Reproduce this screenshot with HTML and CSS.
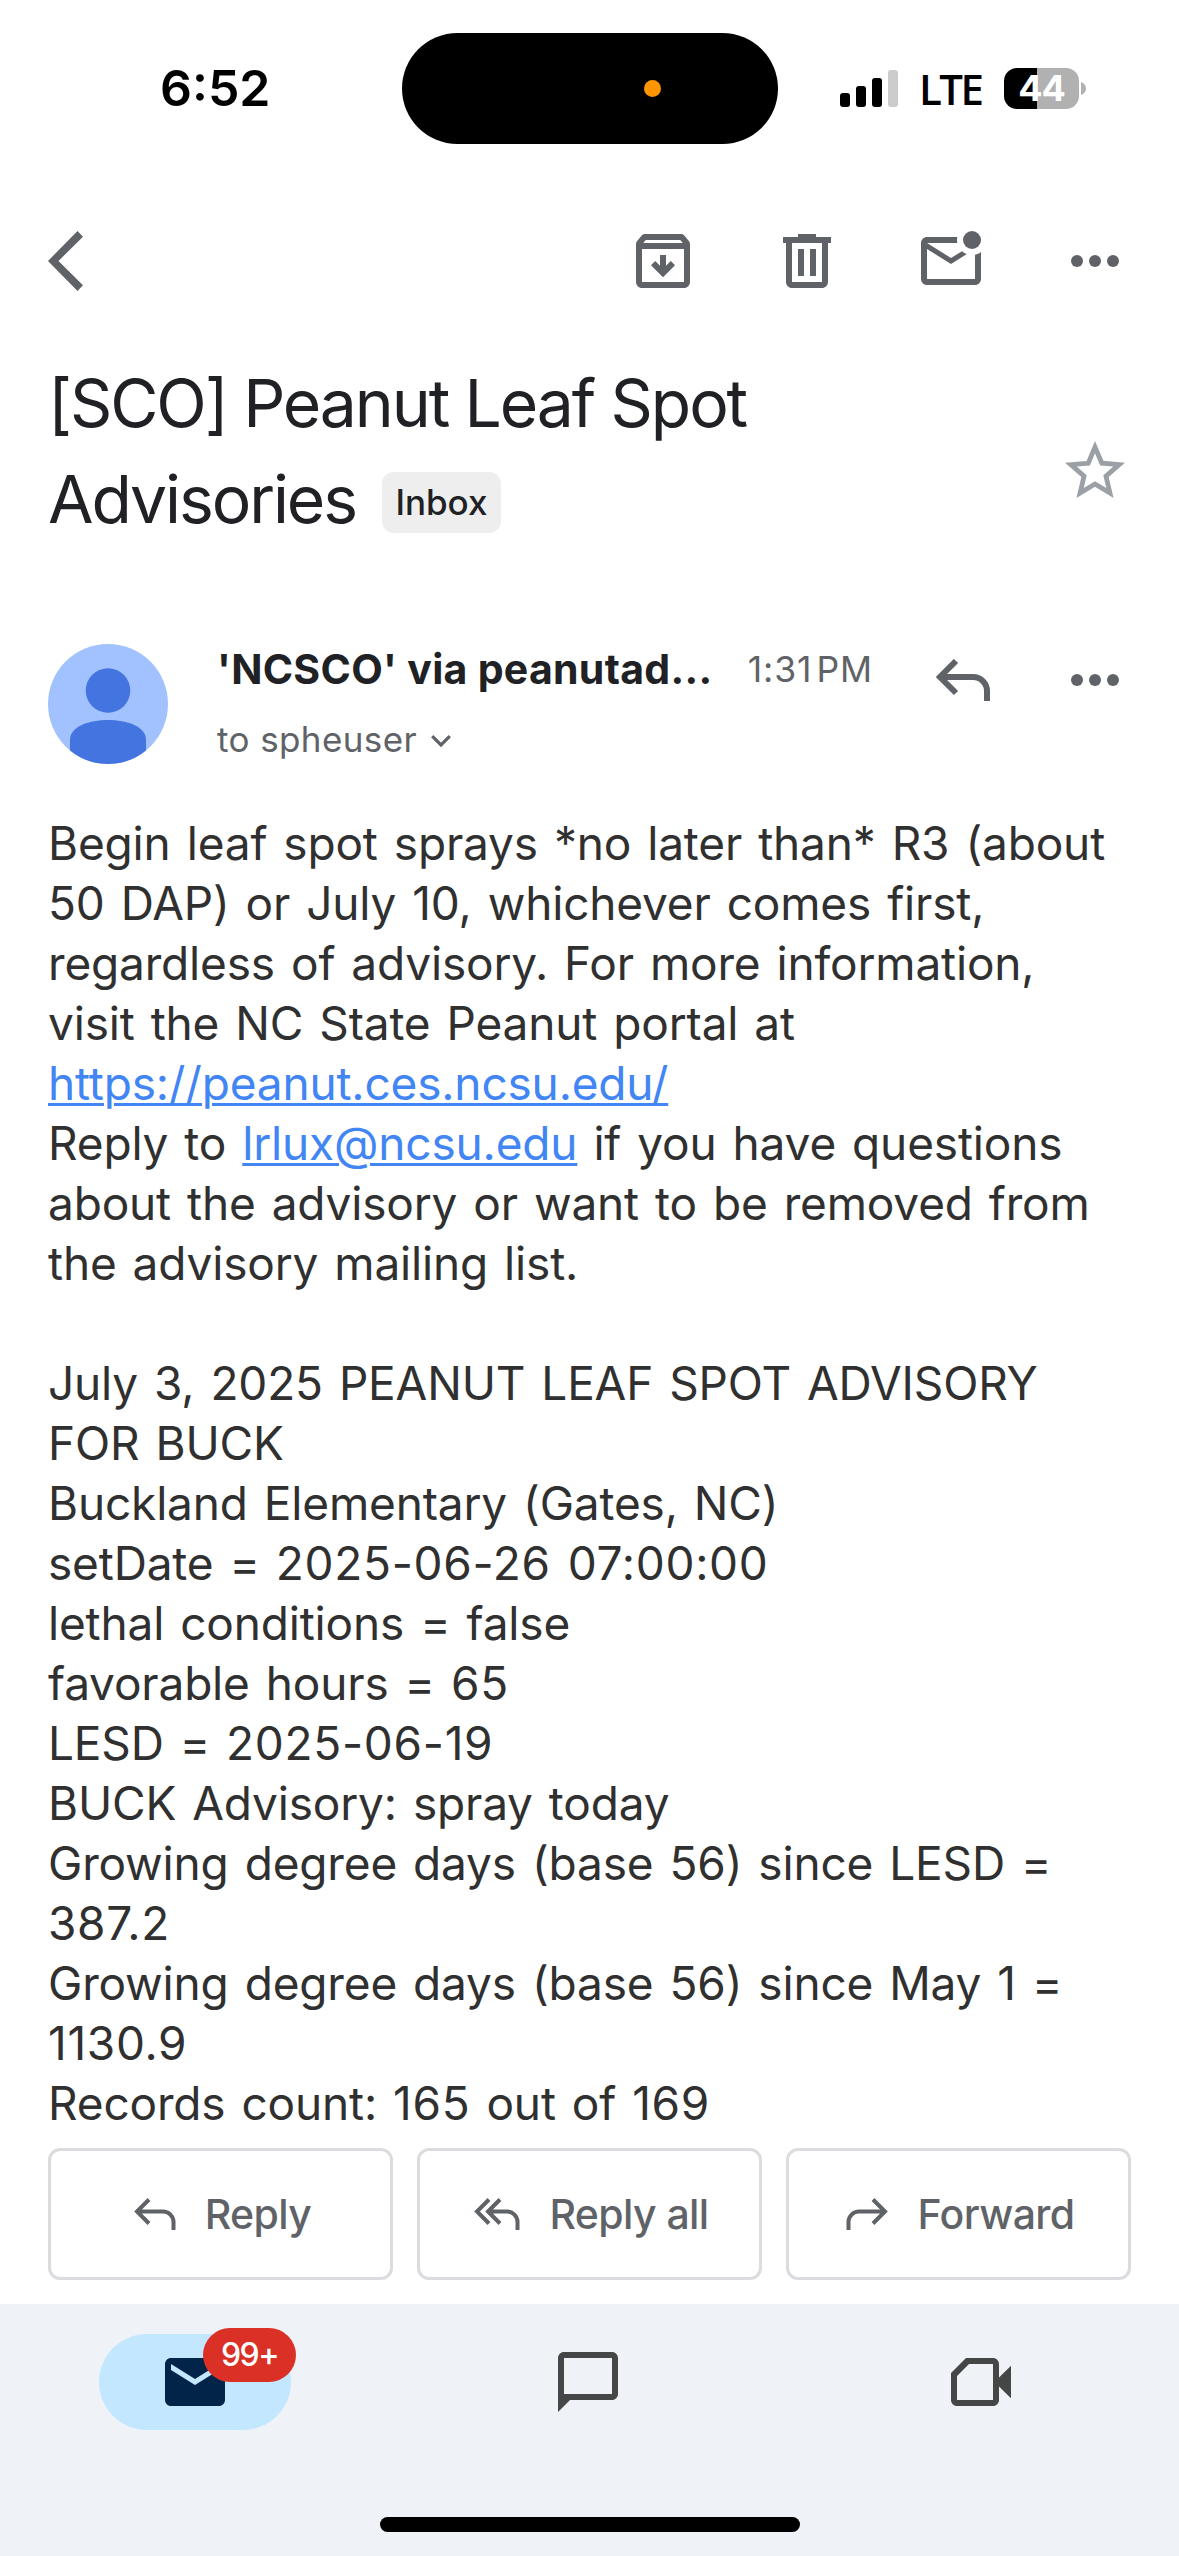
FILE: index.html
```html
<!DOCTYPE html>
<html lang="en">

<head>
	<meta charset="UTF-8">
	<meta name="viewport" content="width=device-width, initial-scale=1.0">
	<title>[SCO] Peanut Leaf Spot Advisories</title>
	<link rel="stylesheet" href="styles.css">
</head>

<body>
	<div id="status">
		<div class="clock">6:52</div>
		<div class="island"><span class="mic"></span></div>
		<div class="signals">
			<svg class="bars" width="58" height="37" viewBox="0 0 58 37">
				<rect x="0" y="23" width="10" height="14" rx="3" />
				<rect x="16" y="16" width="10" height="21" rx="3" />
				<rect x="32" y="8" width="10" height="29" rx="3" />
				<rect x="48" y="0" width="10" height="37" rx="3" fill="#ccc" />
			</svg>
			<span class="network">LTE</span>
			<div class="battery"><span>44</span></div>
			<svg class="nub" width="5" height="13" viewBox="0 0 5 13">
				<path d="M0 0c3 1 5 3.500 5 6.500S3 12 0 13z" fill="#b1b1b1" />
			</svg>
		</div>
	</div>

	<header>
		<svg class="back" width="72" height="72" viewBox="0 0 72 72">
			<path d="M38.500 6l5.500 5.700L19.500 36 44 60.300 38.500 66 9 36z" />
		</svg>
		<nav>
			<!-- archive -->
			<svg width="72" height="72" viewBox="0 0 24 24">
				<path d="M20.540 5.230l-1.390-1.680C18.880 3.210 18.470 3 18 3H6c-.47 0-.88.21-1.160.55L3.460 5.230C3.170 5.570 3 6.020 3 6.500V19c0 1.100.9 2 2 2h14c1.100 0 2-.9 2-2V6.500c0-.48-.17-.93-.46-1.270zM6.240 5h11.520l.83 1H5.420l.82-1zM5 19V8h14v11H5z" />
				<path d="M11 10h2v3.570L14.600 12l1.400 1.400-4 4-4-4L9.400 12l1.600 1.570z" />
			</svg>
			<!-- delete -->
			<svg width="72" height="72" viewBox="0 0 24 24">
				<path d="M15 4V3H9v1H4v2h1v13c0 1.100.9 2 2 2h10c1.100 0 2-.9 2-2V6h1V4h-5zm2 15H7V6h10v13zM9 8h2v9H9zm4 0h2v9h-2z" />
			</svg>
			<!-- mark unread -->
			<svg width="72" height="72" viewBox="0 0 24 24">
				<path d="M22 8.980V18c0 1.100-.9 2-2 2H4c-1.100 0-2-.9-2-2V6c0-1.100.9-2 2-2h10.100c-.06.32-.1.66-.1 1 0 .34.04.68.1 1H4l8 5 3.670-2.290c.47.43 1.020.76 1.630.98L12 13 4 8v10h16V9.900c.74-.15 1.420-.48 2-.92z" />
				<circle cx="19" cy="5" r="3" />
			</svg>
			<svg width="72" height="72" viewBox="0 0 24 24">
				<circle cx="6" cy="12" r="2" />
				<circle cx="12" cy="12" r="2" />
				<circle cx="18" cy="12" r="2" />
			</svg>
		</nav>
	</header>

	<main>
		<div id="subject">
			<h1>[SCO] Peanut Leaf Spot<br>Advisories<span class="chip">Inbox</span></h1>
			<svg class="star" width="72" height="72" viewBox="0 0 24 24">
				<path d="M22 9.240l-7.190-.62L12 2 9.190 8.630 2 9.240l5.460 4.730L5.820 21 12 17.270 18.180 21l-1.630-7.030L22 9.240zM12 15.400l-3.760 2.270 1-4.280-3.320-2.880 4.380-.38L12 6.100l1.710 4.040 4.380.38-3.320 2.880 1 4.280L12 15.400z" />
			</svg>
		</div>

		<div id="sender">
			<svg class="avatar" width="120" height="120" viewBox="0 0 120 120">
				<clipPath id="round"><circle cx="60" cy="60" r="60" /></clipPath>
				<g clip-path="url(#round)">
					<rect width="120" height="120" fill="#a1c2ff" />
					<circle cx="60" cy="46.500" r="22.300" fill="#4374e0" />
					<path d="M22 120V96C22 82 42 76 60 76s38 6 38 20v24z" fill="#4374e0" />
				</g>
			</svg>
			<div class="who">
				<div class="top">
					<span class="name">'NCSCO' via peanutad...</span>
					<span class="time">1:31&#8202;PM</span>
				</div>
				<div class="to">
					<span>to spheuser</span>
					<svg width="20" height="13" viewBox="0 0 20 13">
						<path d="M1.200 1.200L10 10l8.800-8.800" fill="none" stroke="#5f6368" stroke-width="3.200" />
					</svg>
				</div>
			</div>
			<svg class="reply" width="54" height="42" viewBox="0 0 54 42">
				<path d="M4 18h33a14 14 0 0 1 14 14v10M20 2L4 18l16 16" fill="none" stroke="#5f6368" stroke-width="6" />
			</svg>
			<svg class="more" width="72" height="72" viewBox="0 0 24 24">
				<circle cx="6" cy="12" r="2" />
				<circle cx="12" cy="12" r="2" />
				<circle cx="18" cy="12" r="2" />
			</svg>
		</div>

		<div id="message">
			Begin leaf spot sprays *no later than* R3 (about<br>
			50 DAP) or July 10, whichever comes first,<br>
			regardless of advisory. For more information,<br>
			visit the NC State Peanut portal at<br>
			<a href="#">https://peanut.ces.ncsu.edu/</a><br>
			Reply to <a href="#">lrlux@ncsu.edu</a> if you have questions<br>
			about the advisory or want to be removed from<br>
			the advisory mailing list.<br>
			<br>
			July 3, 2025 PEANUT LEAF SPOT ADVISORY<br>
			FOR BUCK<br>
			Buckland Elementary (Gates, NC)<br>
			setDate = <span class="num">2025-06-26 07:00:00</span><br>
			lethal conditions = false<br>
			favorable hours = <span class="num">65</span><br>
			LESD = <span class="num">2025-06-19</span><br>
			BUCK Advisory: spray today<br>
			Growing degree days (base 56) since LESD =<br>
			<span class="num">387.2</span><br>
			Growing degree days (base 56) since May 1 =<br>
			<span class="num">1130.9</span><br>
			Records count: <span class="num">165</span> out of <span class="num">169</span>
		</div>

		<div id="actions">
			<button>
				<svg width="42" height="32" viewBox="0 0 42 32">
					<path d="M3 13.500h26a10.500 10.500 0 0 1 10.500 10.500v8M15 1.500l-12 12 12 12" />
				</svg>
				<span>Reply</span>
			</button>
			<button>
				<svg width="46" height="32" viewBox="0 0 46 32">
					<path d="M14 13.500h19a10.500 10.500 0 0 1 10.500 10.500v8M26 1.500l-12 12 12 12M15 1.500l-12 12 12 12" />
				</svg>
				<span>Reply all</span>
			</button>
			<button>
				<svg width="42" height="32" viewBox="0 0 42 32">
					<path d="M39 13.500H13A10.500 10.500 0 0 0 2.500 24v8M27 1.500l12 12-12 12" />
				</svg>
				<span>Forward</span>
			</button>
		</div>
	</main>

	<footer>
		<div class="tabs">
			<div class="tab active">
				<svg width="72" height="72" viewBox="0 0 24 24">
					<path d="M20 4H4c-1.100 0-2 .9-2 2v12c0 1.100.9 2 2 2h16c1.100 0 2-.9 2-2V6c0-1.100-.9-2-2-2zm0 4l-8 5-8-5V6l8 5 8-5v2z" />
				</svg>
				<span class="badge">99+</span>
			</div>
			<div class="tab">
				<svg width="72" height="72" viewBox="0 0 24 24">
					<path d="M20 2H4c-1.100 0-2 .9-2 2v18l4-4h14c1.100 0 2-.9 2-2V4c0-1.100-.9-2-2-2zm0 14H4V4h16v12z" />
				</svg>
			</div>
			<div class="tab">
				<svg width="72" height="72" viewBox="0 0 24 24">
					<path d="M7 4h9c1.100 0 2 .9 2 2v4.500l4-3.900v10.800l-4-3.900V18c0 1.100-.9 2-2 2H4c-1.100 0-2-.9-2-2V9zm1 2l-4 4v8h12V6z" fill-rule="evenodd" />
				</svg>
			</div>
		</div>
		<div class="home"></div>
	</footer>
</body>

</html>
```

FILE: styles.css
```css
html,
body {
	margin: 0;
	width: 1179px;
	height: 2556px;
	background: #fff;
	font-family: Inter, 'Liberation Sans', sans-serif;
	color: #202124;
}

body {
	display: flex;
	flex-direction: column;
	overflow: hidden;
}

svg {
	display: block;
	flex: none;
	fill: #5f6368;
}

#status {
	display: grid;
	grid-template-columns: 402px 376px 1fr;
	height: 111px;
	padding-top: 33px;
	color: #000;
}

.clock {
	padding-left: 160px;
	font-size: 50px;
	font-weight: 600;
	line-height: 111px;
}

.island {
	display: flex;
	align-items: center;
	justify-content: flex-end;
	border-radius: 56px;
	background: #000;
}

.mic {
	width: 17px;
	height: 17px;
	margin-right: 117px;
	border-radius: 50%;
	background: #ff9500;
}

.signals {
	display: flex;
	align-items: center;
	padding-left: 62px;
}

.bars {
	fill: #000;
}

.network {
	width: 85px;
	padding-left: 21px;
	font-family: 'Open Sans', sans-serif;
	font-size: 42px;
	font-weight: 600;
	letter-spacing: -2.500px;
}

.battery {
	width: 75px;
	height: 41px;
	border-radius: 13px;
	background: linear-gradient(90deg, #000 33px, #b1b1b1 33px);
	color: #fff;
	font-size: 36px;
	font-weight: 700;
	line-height: 41px;
	letter-spacing: -1px;
	text-align: center;
}

.nub {
	margin-left: 2px;
}

header {
	display: flex;
	justify-content: space-between;
	padding: 81px 48px 0 39px;
}

nav {
	display: flex;
	gap: 72px;
}

main {
	padding: 0 48px;
}

#subject {
	display: flex;
	justify-content: space-between;
	margin-top: 58px;
}

h1 {
	margin: 0;
	font-size: 66px;
	font-weight: 400;
	line-height: 96px;
	letter-spacing: -2.100px;
	white-space: nowrap;
}

.chip {
	display: inline-block;
	width: 119px;
	height: 61px;
	margin-left: 26px;
	border-radius: 12px;
	background: #eee;
	font-size: 35px;
	font-weight: 500;
	line-height: 61px;
	letter-spacing: 0;
	text-align: center;
	vertical-align: 8px;
}

.star {
	margin-top: 80px;
	fill: #9aa0a6;
}

#sender {
	display: flex;
	height: 120px;
	margin-top: 97px;
}

.who {
	width: 719px;
	margin-left: 49px;
	white-space: nowrap;
}

.top {
	display: flex;
	justify-content: space-between;
	width: 656px;
	line-height: 51px;
}

.name {
	font-size: 41px;
	font-weight: 700;
	letter-spacing: .3px;
}

.time {
	color: #5f6368;
	font-size: 35.500px;
	letter-spacing: .9px;
}

.to {
	display: flex;
	align-items: center;
	gap: 14px;
	margin-top: 20px;
	color: #5f6368;
	font-size: 35px;
	line-height: 48px;
	letter-spacing: .4px;
}

.to svg {
	margin-top: 4px;
}

.reply {
	margin-top: 15px;
}

.more {
	margin-left: 69px;
}

#message {
	margin-top: 49px;
	color: #303030;
	font-size: 46px;
	line-height: 60px;
	letter-spacing: -.17px;
	word-spacing: 3.300px;
	white-space: nowrap;
}

#message a {
	color: #4285f4;
	text-decoration-thickness: 3px;
	text-underline-offset: 3px;
}

.num {
	letter-spacing: .7px;
}

#actions {
	display: grid;
	grid-template-columns: repeat(3, 1fr);
	gap: 24px;
	margin-top: 15px;
}

button {
	display: flex;
	align-items: center;
	justify-content: center;
	gap: 29px;
	box-sizing: border-box;
	height: 132px;
	padding: 0 0 0 4px;
	border: 3px solid #dadce0;
	border-radius: 12px;
	background: #fff;
	color: #5f6368;
	font: inherit;
	font-size: 41px;
	font-weight: 500;
	letter-spacing: -.6px;
}

button svg {
	fill: none;
	stroke: #5f6368;
	stroke-width: 4;
}

footer {
	height: 252px;
	margin-top: 24px;
	background: #eff3f8;
}

.tabs {
	display: grid;
	grid-template-columns: repeat(3, 1fr);
	justify-items: center;
	margin: 0 1.500px 0 -1.500px;
	padding-top: 30px;
}

.tab {
	position: relative;
	display: flex;
	align-items: center;
	justify-content: center;
	width: 192px;
	height: 96px;
	border-radius: 48px;
}

.tab svg {
	fill: #444746;
}

.active {
	background: #c2e7ff;
}

.active svg {
	fill: #022448;
}

.badge {
	position: absolute;
	top: -6px;
	left: 104px;
	width: 93px;
	height: 54px;
	border-radius: 27px;
	background: #da3025;
	color: #fff;
	font-size: 32px;
	font-weight: 500;
	line-height: 54px;
	letter-spacing: -1.500px;
	text-align: center;
}

.home {
	width: 420px;
	height: 15px;
	margin: 87px auto 0;
	border-radius: 8px;
	background: #000;
}
```
